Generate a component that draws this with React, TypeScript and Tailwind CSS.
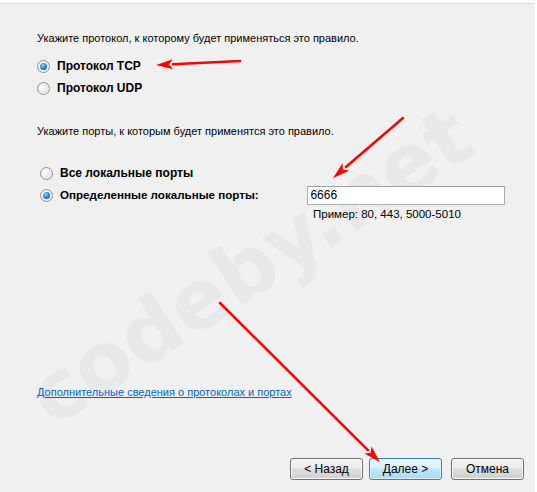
import { useState } from "react"

const font = "font-['Liberation_Sans',Arial,sans-serif]"

const Radio = ({ checked }: { checked: boolean }) => (
    <span className="relative w-[13px] h-[13px] rounded-full border border-[#8e8f8f] bg-[radial-gradient(circle_at_35%_35%,#ffffff,#e0e0e0_70%,#cfcfcf)] flex items-center justify-center shrink-0 shadow-[inset_0_0_0_1px_#f4f4f4]">
        {checked && (
            <span className="w-[7px] h-[7px] rounded-full bg-[radial-gradient(circle_at_40%_35%,#8fd0ff,#1b78c8_60%,#0b4f95)]" />
        )}
    </span>
)

const Arrow = ({ x1, y1, x2, y2 }: { x1: number, y1: number, x2: number, y2: number }) => {
    const a = Math.atan2(y2 - y1, x2 - x1)
    const len = 17
    const w = 5
    const bx = x2 - Math.cos(a) * len
    const by = y2 - Math.sin(a) * len
    const px = -Math.sin(a) * w
    const py = Math.cos(a) * w
    return (
        <g>
            <line x1={x1} y1={y1} x2={bx} y2={by} stroke="#f00" strokeWidth="2.5" strokeLinecap="round" />
            <polygon points={`${x2},${y2} ${bx + px},${by + py} ${bx + Math.cos(a) * 4},${by + Math.sin(a) * 4} ${bx - px},${by - py}`} fill="#f00" />
        </g>
    )
}

const Button = ({ label, primary }: { label: string, primary?: boolean }) => (
    <button
        className={`w-[73px] h-[22px] rounded-[3px] border text-[12px] text-black leading-none flex items-center justify-center ${primary
            ? "border-[#3c7fb1] bg-[linear-gradient(#eaf6fd,#d9f0fc_45%,#bee6fd_50%,#a7d9f5)] shadow-[inset_0_0_0_1px_#dff2fc]"
            : "border-[#707070] bg-[linear-gradient(#f2f2f2,#ebebeb_45%,#dddddd_50%,#cfcfcf)] shadow-[inset_0_0_0_1px_#fbfbfb]"}`}
    >{label}</button>
)

const App = () => {
    const [protocol, setProtocol] = useState("tcp")
    const [ports, setPorts] = useState("specific")
    const [value, setValue] = useState("6666")

    return (
        <div className={`relative w-[537px] h-[492px] overflow-hidden bg-[#f0f0f0] text-black ${font}`}>
            <div className="h-[4px] bg-white border-b border-[#dadada]" />

            {/* watermark */}
            <div aria-hidden="true" className="absolute left-[250px] top-[266px] -translate-x-1/2 -translate-y-1/2 -rotate-[33deg] text-[82px] font-bold text-[#e9e9e9] whitespace-nowrap font-['DejaVu_Sans',sans-serif] select-none">
                codeby.net
            </div>

            <div className="relative flex flex-col pl-[37px] pr-[32px] text-[11px] leading-[16px]">
                <p className="mt-[26px]">Укажите протокол, к которому будет применяться это правило.</p>

                <div className="mt-[9px] flex flex-col text-[12px]">
                    <label className="h-[22px] flex items-center gap-[7px] font-bold" onClick={() => setProtocol("tcp")}>
                        <Radio checked={protocol === "tcp"} />
                        Протокол TCP
                    </label>
                    <label className="h-[22px] flex items-center gap-[7px] font-bold" onClick={() => setProtocol("udp")}>
                        <Radio checked={protocol === "udp"} />
                        Протокол UDP
                    </label>
                </div>

                <p className="mt-[24px]">Укажите порты, к которым будет применятся это правило.</p>

                <div className="mt-[23px] flex flex-col pl-[3px]">
                    <label className="h-[22px] flex items-center gap-[7px] font-bold text-[12px]" onClick={() => setPorts("all")}>
                        <Radio checked={ports === "all"} />
                        Все локальные порты
                    </label>
                    <div className="h-[22px] flex items-center">
                        <label className="w-[268px] flex items-center gap-[7px] font-bold text-[11.6px]" onClick={() => setPorts("specific")}>
                            <Radio checked={ports === "specific"} />
                            Определенные локальные порты:
                        </label>
                        <input
                            className="w-[198px] h-[19px] bg-white border border-[#abadb3] border-t-[#9ea0a6] px-[2px] text-[12px] outline-none"
                            value={value}
                            onChange={(e) => setValue(e.target.value)}
                        />
                    </div>
                    <p className="pl-[273px] text-[11.5px]">Пример: 80, 443, 5000-5010</p>
                </div>

                <a href="#" className="mt-[162px] self-start text-[#0066cc] underline">Дополнительные сведения о протоколах и портах</a>

                <div className="mt-[58px] flex justify-end">
                    <div className="flex gap-[6px] mr-[-19px]">
                        <Button label="< Назад" />
                        <Button label="Далее >" primary />
                        <div className="ml-[3px]"><Button label="Отмена" /></div>
                    </div>
                </div>
            </div>

            <div className="absolute top-0 right-0 w-[2px] h-full bg-white" />

            <svg className="absolute inset-0 pointer-events-none" width="537" height="492">
                <Arrow x1={240} y1={61} x2={156} y2={65} />
                <Arrow x1={403} y1={118} x2={333} y2={178} />
                <Arrow x1={220} y1={303} x2={380} y2={462} />
            </svg>
        </div>
    )
}

export default App
